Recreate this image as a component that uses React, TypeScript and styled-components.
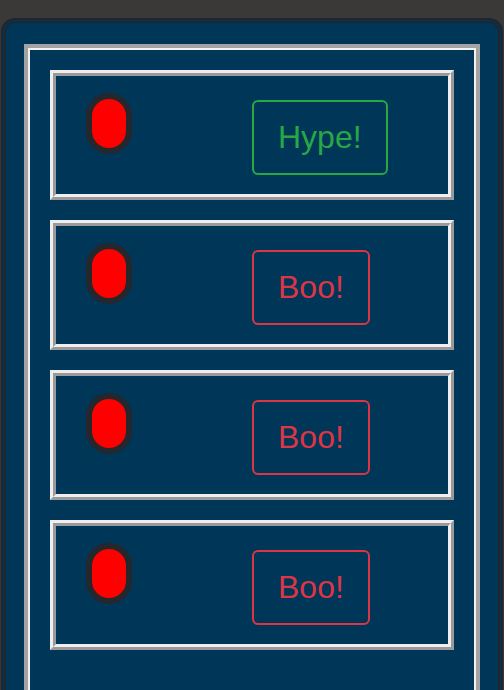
import React from "react";
import styled, { createGlobalStyle } from "styled-components";

const Global = createGlobalStyle`
  html, body {
    margin: 0;
    padding: 0;
    background: #3a3937;
    font-family: "Liberation Sans", Arial, sans-serif;
  }
  * { box-sizing: border-box; }
`;

const Panel = styled.div`
  margin: 18px 0 0 1px;
  width: 502px;
  min-height: 720px;
  background: #003658;
  border: 5px double #1f262d;
  border-radius: 14px;
  padding: 25px 22px 0 22px;
`;

const Frame = styled.div`
  border: 2px solid #f2f2f2;
  box-shadow: 0 0 0 4px #a3a3a3;
  padding: 20px 20px 80px 20px;
  display: flex;
  flex-direction: column;
  gap: 20px;
`;

const Card = styled.div`
  height: 130px;
  border: 6px ridge #eeeeee;
  display: grid;
  grid-template-columns: 1fr 1fr;
`;

const ToggleCell = styled.div`
  padding: 17px 0 0 30px;
`;

const Toggle = styled.div`
  width: 46px;
  height: 61px;
  border-radius: 23px;
  border: 6px solid #24272b;
  background: #ff0000;
`;

const ButtonCell = styled.div`
  padding-top: 24px;
`;

const VoteButton = styled.button<{ $tone: "success" | "danger" }>`
  font-family: "Liberation Sans", Arial, sans-serif;
  font-size: 32px;
  line-height: 39px;
  padding: 16px 24px;
  background: transparent;
  border: 2px solid ${(p) => (p.$tone === "success" ? "#28a745" : "#dc3545")};
  color: ${(p) => (p.$tone === "success" ? "#28a745" : "#dc3545")};
  border-radius: 6px;
  cursor: pointer;
`;

const items: { label: string; tone: "success" | "danger" }[] = [
  { label: "Hype!", tone: "success" },
  { label: "Boo!", tone: "danger" },
  { label: "Boo!", tone: "danger" },
  { label: "Boo!", tone: "danger" },
];

export default function App() {
  return (
    <>
      <Global />
      <Panel>
        <Frame>
          {items.map((it, i) => (
            <Card key={i}>
              <ToggleCell>
                <Toggle />
              </ToggleCell>
              <ButtonCell>
                <VoteButton $tone={it.tone}>{it.label}</VoteButton>
              </ButtonCell>
            </Card>
          ))}
        </Frame>
      </Panel>
    </>
  );
}
